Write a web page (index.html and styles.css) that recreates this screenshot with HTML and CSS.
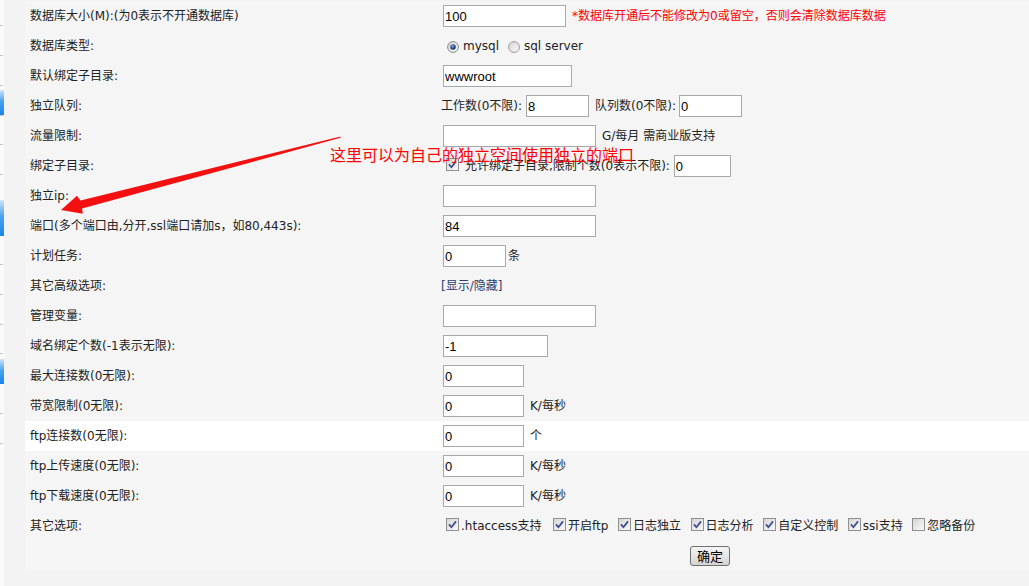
FILE: index.html
```html
<!DOCTYPE html>
<html lang="zh-CN">
<head>
<meta charset="utf-8">
<title>空间设置</title>
<link rel="stylesheet" href="styles.css">
</head>
<body>
<svg class="defs" width="0" height="0" aria-hidden="true">
  <defs>
    <linearGradient id="boxg" x1="0" y1="0" x2="1" y2="1">
      <stop offset="0" stop-color="#d4d4d4"/>
      <stop offset="1" stop-color="#fbfbfb"/>
    </linearGradient>
    <radialGradient id="dotg" cx="0.4" cy="0.35" r="0.7">
      <stop offset="0" stop-color="#8fb6e6"/>
      <stop offset="0.5" stop-color="#2d5496"/>
      <stop offset="1" stop-color="#1b2f5e"/>
    </radialGradient>
  </defs>
</svg>
<div class="page">
  <div class="strip">
    <div class="tab tab1"></div>
    <div class="tab tab2"></div>
    <div class="tab tab3"></div>
  </div>
  <div class="main">
    <table class="form">
      <tr>
        <td class="lbl">数据库大小(M):(为0表示不开通数据库)</td>
        <td><div class="val"><input class="txt w123" value="100"><span class="note">*数据库开通后不能修改为0或留空，否则会清除数据库数据</span></div></td>
      </tr>
      <tr>
        <td class="lbl">数据库类型:</td>
        <td><div class="val">
          <span class="radio"><svg viewBox="0 0 12 12" width="12" height="12"><circle cx="6" cy="6" r="5.4" fill="url(#boxg)" stroke="#8a8a8a" stroke-width="1"/><circle cx="6" cy="6" r="2.8" fill="url(#dotg)"/></svg></span><span class="rlabel">mysql</span>
          <span class="radio r2"><svg viewBox="0 0 12 12" width="12" height="12"><circle cx="6" cy="6" r="5.4" fill="url(#boxg)" stroke="#9a9a9a" stroke-width="1"/></svg></span><span class="rlabel">sql server</span>
        </div></td>
      </tr>
      <tr>
        <td class="lbl">默认绑定子目录:</td>
        <td><div class="val"><input class="txt w129" value="wwwroot"></div></td>
      </tr>
      <tr>
        <td class="lbl">独立队列:</td>
        <td><div class="val"><span>工作数(0不限):</span><input class="txt w63 gap4" value="8"><span class="unit">队列数(0不限):</span><input class="txt w63 gap3" value="0"></div></td>
      </tr>
      <tr>
        <td class="lbl">流量限制:</td>
        <td><div class="val"><input class="txt w153" value=""><span class="unit">G/每月 需商业版支持</span></div></td>
      </tr>
      <tr>
        <td class="lbl">绑定子目录:</td>
        <td><div class="val">
          <span class="cb cb-first"><svg viewBox="0 0 13 13" width="13" height="13"><rect x="0.5" y="0.5" width="12" height="12" fill="url(#boxg)" stroke="#8f8f8f"/><path d="M3 6.4 L5.4 9.2 L10 3.4" fill="none" stroke="#3b4a90" stroke-width="1.7"/></svg></span><span class="cbtext">允许绑定子目录,限制个数(0表示不限):</span><input class="txt w57 gap4" value="0">
        </div></td>
      </tr>
      <tr>
        <td class="lbl">独立ip:</td>
        <td><div class="val"><input class="txt w153" value=""></div></td>
      </tr>
      <tr>
        <td class="lbl">端口(多个端口由,分开,ssl端口请加s，如80,443s):</td>
        <td><div class="val"><input class="txt w153" value="84"></div></td>
      </tr>
      <tr>
        <td class="lbl">计划任务:</td>
        <td><div class="val"><input class="txt w63" value="0"><span class="unit2">条</span></div></td>
      </tr>
      <tr>
        <td class="lbl">其它高级选项:</td>
        <td><div class="val"><span class="toggle">[显示/隐藏]</span></div></td>
      </tr>
      <tr>
        <td class="lbl">管理变量:</td>
        <td><div class="val"><input class="txt w153" value=""></div></td>
      </tr>
      <tr>
        <td class="lbl">域名绑定个数(-1表示无限):</td>
        <td><div class="val"><input class="txt w105" value="-1"></div></td>
      </tr>
      <tr>
        <td class="lbl">最大连接数(0无限):</td>
        <td><div class="val"><input class="txt w81" value="0"></div></td>
      </tr>
      <tr>
        <td class="lbl">带宽限制(0无限):</td>
        <td><div class="val"><input class="txt w81" value="0"><span class="unit">K/每秒</span></div></td>
      </tr>
      <tr class="hl">
        <td class="lbl">ftp连接数(0无限):</td>
        <td><div class="val"><input class="txt w81" value="0"><span class="unit">个</span></div></td>
      </tr>
      <tr>
        <td class="lbl">ftp上传速度(0无限):</td>
        <td><div class="val"><input class="txt w81" value="0"><span class="unit">K/每秒</span></div></td>
      </tr>
      <tr>
        <td class="lbl">ftp下载速度(0无限):</td>
        <td><div class="val"><input class="txt w81" value="0"><span class="unit">K/每秒</span></div></td>
      </tr>
      <tr>
        <td class="lbl">其它选项:</td>
        <td><div class="val opts">
          <span class="opt"><span class="cb"><svg viewBox="0 0 13 13" width="13" height="13"><rect x="0.5" y="0.5" width="12" height="12" fill="url(#boxg)" stroke="#8f8f8f"/><path d="M3 6.4 L5.4 9.2 L10 3.4" fill="none" stroke="#3b4a90" stroke-width="1.7"/></svg></span><span>.htaccess支持</span></span>
          <span class="opt"><span class="cb"><svg viewBox="0 0 13 13" width="13" height="13"><rect x="0.5" y="0.5" width="12" height="12" fill="url(#boxg)" stroke="#8f8f8f"/><path d="M3 6.4 L5.4 9.2 L10 3.4" fill="none" stroke="#3b4a90" stroke-width="1.7"/></svg></span><span>开启ftp</span></span>
          <span class="opt"><span class="cb"><svg viewBox="0 0 13 13" width="13" height="13"><rect x="0.5" y="0.5" width="12" height="12" fill="url(#boxg)" stroke="#8f8f8f"/><path d="M3 6.4 L5.4 9.2 L10 3.4" fill="none" stroke="#3b4a90" stroke-width="1.7"/></svg></span><span>日志独立</span></span>
          <span class="opt"><span class="cb"><svg viewBox="0 0 13 13" width="13" height="13"><rect x="0.5" y="0.5" width="12" height="12" fill="url(#boxg)" stroke="#8f8f8f"/><path d="M3 6.4 L5.4 9.2 L10 3.4" fill="none" stroke="#3b4a90" stroke-width="1.7"/></svg></span><span>日志分析</span></span>
          <span class="opt"><span class="cb"><svg viewBox="0 0 13 13" width="13" height="13"><rect x="0.5" y="0.5" width="12" height="12" fill="url(#boxg)" stroke="#8f8f8f"/><path d="M3 6.4 L5.4 9.2 L10 3.4" fill="none" stroke="#3b4a90" stroke-width="1.7"/></svg></span><span>自定义控制</span></span>
          <span class="opt"><span class="cb"><svg viewBox="0 0 13 13" width="13" height="13"><rect x="0.5" y="0.5" width="12" height="12" fill="url(#boxg)" stroke="#8f8f8f"/><path d="M3 6.4 L5.4 9.2 L10 3.4" fill="none" stroke="#3b4a90" stroke-width="1.7"/></svg></span><span>ssi支持</span></span>
          <span class="opt"><span class="cb"><svg viewBox="0 0 13 13" width="13" height="13"><rect x="0.5" y="0.5" width="12" height="12" fill="url(#boxg)" stroke="#8f8f8f"/></svg></span><span>忽略备份</span></span>
        </div></td>
      </tr>
      <tr>
        <td class="lbl"></td>
        <td><div class="val"><button class="btn" type="button">确定</button></div></td>
      </tr>
    </table>
  </div>
  <div class="callout">这里可以为自己的独立空间使用独立的端口</div>
  <svg class="arrow" viewBox="0 0 1029 586" width="1029" height="586" aria-hidden="true">
    <polygon points="340.5,136.4 80.5,200.6 77,195.8 61,210 82.8,213.8 82,208.6 340.5,137.8" fill="#f41010"/>
  </svg>
</div>
</body>
</html>
```

FILE: styles.css
```css
* { box-sizing: border-box; }

html, body {
  margin: 0;
  padding: 0;
}

body {
  width: 1029px;
  height: 586px;
  overflow: hidden;
  background: #f3f3f3;
  font-family: "DejaVu Sans", "Noto Sans CJK SC", sans-serif;
  font-size: 12px;
  color: #222;
}

.defs {
  position: absolute;
  width: 0;
  height: 0;
}

.page {
  position: relative;
  display: flex;
  height: 586px;
}

/* left edge of a scrolled-off side menu */
.strip {
  width: 4px;
  flex: none;
  display: flex;
  flex-direction: column;
  background-color: #fbfbfb;
  background-image: repeating-linear-gradient(to bottom, transparent 0 25px, #c6c6c6 25px 26px, transparent 26px 29.86px);
  background-size: 3px 450px;
  background-position: 0 0;
  background-repeat: no-repeat;
}

.tab {
  background: linear-gradient(#cfe4f9, #4aa3f0 45%, #1b85ea);
}
.tab1 { margin-top: 90px; height: 25px; }
.tab2 { margin-top: 85px; height: 36px; }
.tab3 { margin-top: 123px; height: 25px; }

.main {
  flex: 1;
  padding: 1px 0 0 21px;
}

.form {
  width: 1004px;
  border-collapse: collapse;
  border-spacing: 0;
  background: #f5f5f5;
}

.form td {
  padding: 0;
  height: 30px;
  vertical-align: middle;
  line-height: 16px;
}

.form td.lbl {
  width: 416px;
  padding-left: 5px;
  white-space: nowrap;
}

.form tr.hl { background: #ffffff; }

.val {
  display: flex;
  align-items: center;
  height: 30px;
  white-space: nowrap;
}

.txt {
  height: 22px;
  margin: 0 0 0 2px;
  padding: 0 1px;
  border: 1px solid #a9a9a9;
  background: #fff;
  color: #000;
  font-family: "Liberation Sans", sans-serif;
  font-size: 13px;
  outline: none;
}

.w57 { width: 57px; }
.w63 { width: 63px; }
.w81 { width: 81px; }
.w105 { width: 105px; }
.w123 { width: 123px; }
.w129 { width: 129px; }
.w153 { width: 153px; }

.gap4 { margin-left: 4px; }
.gap3 { margin-left: 3px; }

.note {
  margin-left: 6px;
  color: #ff0000;
}

.unit { margin-left: 6px; }
.unit2 { margin-left: 2px; }

.radio {
  display: inline-flex;
  width: 12px;
  height: 12px;
  margin-left: 6px;
  margin-top: 1px;
}
.radio.r2 { margin-left: 9px; }

.rlabel {
  margin-left: 4px;
  color: #222;
}

.cb {
  display: inline-flex;
  width: 13px;
  height: 13px;
  margin-bottom: 3px;
  margin-right: 2px;
}

.cb-first { margin-left: 5px; margin-right: 6px; }

.toggle { color: #2b3f72; }

.opts .opt {
  display: inline-flex;
  align-items: center;
  margin-right: 9.6px;
}
.opts .opt:first-child { margin-left: 5px; margin-right: 11.5px; }

.btn {
  width: 40px;
  height: 20px;
  margin-left: 249px;
  padding: 0;
  border: 1px solid #707070;
  border-radius: 3px;
  background: linear-gradient(#f4f4f4, #e6e6e6 50%, #d4d4d4);
  color: #000;
  font-family: "Noto Sans CJK SC", sans-serif;
  font-size: 13px;
  line-height: 18px;
}

.callout {
  position: absolute;
  left: 330px;
  top: 145px;
  color: #ff0000;
  font-family: "Noto Sans CJK SC", sans-serif;
  font-size: 16px;
  line-height: 18px;
  white-space: nowrap;
}

.arrow {
  position: absolute;
  left: 0;
  top: 0;
  pointer-events: none;
}
```
